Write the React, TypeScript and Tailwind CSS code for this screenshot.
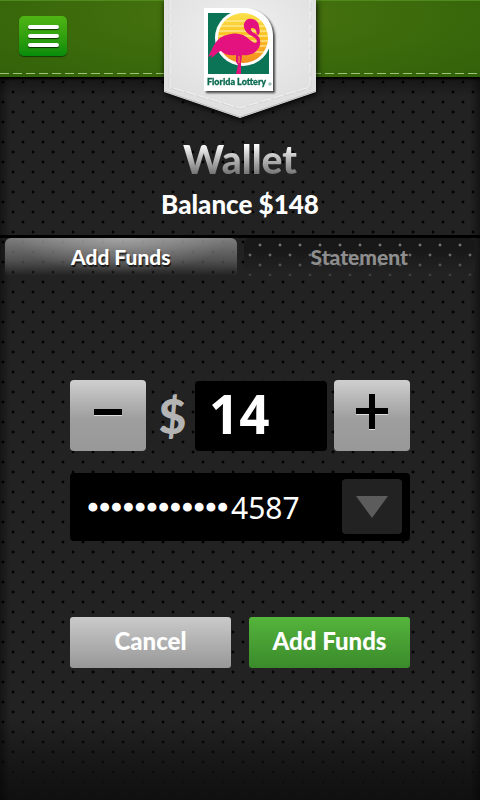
import { useState } from "react";

function LotteryLogo() {
  const stripes = [13, 18, 23, 28, 33, 38, 44];
  return (
    <svg viewBox="0 0 70 83" className="h-[83px] w-[70px] drop-shadow-[2px_2px_1px_rgba(0,0,0,0.7)]" role="img" aria-label="Florida Lottery">
      <defs>
        <linearGradient id="sun" x1="0" y1="0" x2="0" y2="1">
          <stop offset="0" stopColor="#fbe04a" />
          <stop offset="0.5" stopColor="#fbc023" />
          <stop offset="1" stopColor="#f48b1f" />
        </linearGradient>
        <clipPath id="disc">
          <circle cx="39" cy="30" r="25" />
        </clipPath>
      </defs>
      <path d="M0 0H43C60 2 69 14 69 28V83H0Z" fill="#fff" />
      <path d="M4 5H39V30H65V66H4Z" fill="#0b7456" />
      <circle cx="39" cy="30" r="28" fill="#fff" />
      <circle cx="39" cy="30" r="25" fill="url(#sun)" />
      <g clipPath="url(#disc)">
        {stripes.map((y) => (
          <path key={y} d={`M10 ${y}H68`} stroke="#fff3b8" strokeWidth="1" />
        ))}
      </g>
      <path
        d="M4 49L8 41C11 34 16 28 23 27C29 25 34 25 39 27C44 29 47 34 51 35C55 34 52 30 48 28C43 26 39 21 40 16C41 12 44 10 48 11C53 12 55 15 55 19C56 22 56 26 54 27C52 26 53 23 51 21C49 19 46 20 47 22C48 25 52 25 54 28C57 31 57 37 54 41C51 46 44 48 38 47L37 55L37 66H32L34 57L32 54V47C26 48 21 47 17 43C13 44 11 48 7 50L8 47Z"
        fill="#e3127e"
      />
      <path d="M35 48V55" stroke="#f9a52a" strokeWidth="1" />
      <text x="3" y="77" fill="#0b6b50" stroke="#0b6b50" strokeWidth="0.300" fontSize="9" fontWeight="900" fontFamily="Lato, sans-serif">
        Florida Lottery
      </text>
      <circle cx="66" cy="76" r="1.200" fill="none" stroke="#0b6b50" strokeWidth="0.500" />
    </svg>
  );
}

function Header() {
  return (
    <header className="relative h-[77px] border-t border-[#4f8a1c] bg-[radial-gradient(ellipse_at_50%_20%,#4b7410_0%,#3e6c0c_45%,#31610a_100%)] shadow-[0_2px_2px_#000]">
      <div className="px-[19px] pt-[15px]">
        <button
          type="button"
          aria-label="Menu"
          className="flex h-10 w-12 flex-col items-center justify-center gap-[5px] rounded-[5px] bg-linear-to-b from-[#4eb514] to-[#048c0b] pb-[1px] shadow-[0_1px_1px_#173a05]"
        >
          <span className="h-1 w-[31px] rounded-full bg-white shadow-[0_1px_1px_rgba(0,0,0,0.7)]" />
          <span className="h-1 w-[31px] rounded-full bg-white shadow-[0_1px_1px_rgba(0,0,0,0.7)]" />
          <span className="h-1 w-[31px] rounded-full bg-white shadow-[0_1px_1px_rgba(0,0,0,0.7)]" />
        </button>
      </div>
      <div className="absolute inset-x-0 bottom-[3px] h-px bg-[repeating-linear-gradient(90deg,#9cc473_0px,#9cc473_9px,transparent_9px,transparent_13px)]" />
      <div className="absolute -top-px left-1/2 h-[118px] w-[152px] -translate-x-1/2">
        <svg viewBox="0 0 152 118" className="absolute inset-0 h-full w-full overflow-visible drop-shadow-[1px_2px_3px_rgba(0,0,0,0.9)]" aria-hidden="true">
          <defs>
            <radialGradient id="badge" cx="0.5" cy="0.3" r="0.7">
              <stop offset="0" stopColor="#f0f0f0" />
              <stop offset="1" stopColor="#dedede" />
            </radialGradient>
          </defs>
          <path d="M0 0H152V92L76 118L0 92Z" fill="url(#badge)" />
          <path d="M0 91L76 117L152 91" fill="none" stroke="#bdbdbd" />
          <path d="M6 0V87L76 108L146 87V0" fill="none" stroke="#f2f2f2" strokeDasharray="10 3" />
          <path d="M5 0V88L76 109L147 88V0" fill="none" stroke="#c9c9c9" strokeWidth="0.500" strokeDasharray="10 3" />
        </svg>
        <div className="relative flex justify-center pt-2 pr-[2px]">
          <LotteryLogo />
        </div>
      </div>
    </header>
  );
}

const stepButton =
  "h-[71px] w-[76px] shrink-0 rounded bg-linear-to-b from-[#cfcfcf] via-[#9e9e9e] via-55% to-[#989898]";

export default function App() {
  const [amount, setAmount] = useState(14);
  return (
    <div className="min-h-screen bg-[#222] bg-[linear-gradient(90deg,rgba(0,0,0,0.4),transparent_10px,transparent_calc(100%-10px),rgba(0,0,0,0.4)),linear-gradient(0deg,#101010_0px,rgba(17,17,17,0.850)_22px,transparent_82px),radial-gradient(circle_at_3px_2px,#000_1px,transparent_1.8px),radial-gradient(circle_at_13px_12px,#000_1px,transparent_1.8px)] bg-[size:auto,auto,20px_20px,20px_20px] font-[Lato,'Open_Sans',sans-serif] text-white">
      <Header />
      <main>
        <section className="flex h-[158px] flex-col items-center bg-linear-to-b from-black/35 via-transparent via-12% pt-[58px] text-center">
          <h1 className="bg-linear-to-b from-white from-20% to-[#777] to-80% bg-clip-text text-[39px] leading-[48px] font-black text-transparent">
            Wallet
          </h1>
          <p className="text-[26px] leading-[42px] font-black">Balance $148</p>
        </section>
        <div role="tablist" className="flex gap-[7px] border-t-[3px] border-black px-[5px] text-[21px] leading-[36px] font-black">
          <button
            type="button"
            role="tab"
            aria-selected="true"
            className="h-[38px] flex-1 rounded-t-md bg-[radial-gradient(ellipse_at_50%_0%,rgba(255,255,255,0.300),transparent_65%),linear-gradient(180deg,rgba(150,150,150,0.800),rgba(100,100,100,0.700)_60%,transparent)] text-shadow-[1px_2px_1px_rgba(0,0,0,0.7)]"
          >
            Add Funds
          </button>
          <button
            type="button"
            role="tab"
            aria-selected="false"
            className="h-[38px] flex-1 rounded-md bg-[linear-gradient(180deg,rgba(24,24,24,0)_30%,rgba(34,34,34,0.700)),radial-gradient(circle_at_16px_7px,#777_1px,transparent_1.8px),radial-gradient(circle_at_6px_17px,#777_1px,transparent_1.8px),linear-gradient(180deg,#181818_40%,#222)] bg-[size:auto,20px_20px,20px_20px,auto] text-[#8e8e8e]"
          >
            Statement
          </button>
        </div>
        <form className="px-[70px] pt-[104px]" onSubmit={(e) => e.preventDefault()}>
          <div className="flex items-center gap-[7px]">
            <button type="button" aria-label="Decrease amount" className={stepButton} onClick={() => setAmount(Math.max(0, amount - 1))}>
              <span className="mx-auto mb-[8px] block h-[6px] w-7 bg-black shadow-[0_1px_0_#ddd]" />
            </button>
            <label htmlFor="amount" className="w-[35px] pl-1 text-center text-[48px] leading-[66px] font-black text-[#b4b4b4]">
              $
            </label>
            <input
              id="amount"
              inputMode="numeric"
              value={amount}
              onChange={(e) => setAmount(Number(e.target.value) || 0)}
              className="h-[70px] min-w-0 flex-1 rounded bg-black px-[14px] pb-1 font-['Noto_Sans',sans-serif] text-[53px] leading-[66px] font-bold outline-none"
            />
            <button type="button" aria-label="Increase amount" className={stepButton} onClick={() => setAmount(amount + 1)}>
              <svg viewBox="0 0 34 36" className="mx-auto mb-[8px] h-9 w-[34px]" aria-hidden="true">
                <path d="M14 1H20V15H33V21H20V36H14V21H1V15H14Z" fill="#ddd" />
                <path d="M14 0H20V14H33V20H20V35H14V20H1V14H14Z" fill="#000" />
              </svg>
            </button>
          </div>
          <div className="relative mt-[22px]">
            <select
              aria-label="Card"
              className="h-[68px] w-full appearance-none rounded bg-black pr-[68px] pl-[161px] font-['Noto_Sans',sans-serif] text-[30px] outline-none"
            >
              <option>4587</option>
            </select>
            <span className="pointer-events-none absolute inset-y-0 left-[17px] font-['DejaVu_Sans',sans-serif] text-[20px] leading-[68px] [-webkit-text-stroke:3px_white]">
              ••••••••••••
            </span>
            <span className="pointer-events-none absolute top-[6px] right-[8px] flex h-[55px] w-[60px] items-center justify-center rounded bg-[#222]">
              <svg viewBox="0 0 32 22" className="h-[22px] w-8" aria-hidden="true">
                <path d="M0 0H32L16 22Z" fill="#5c5c5c" />
              </svg>
            </span>
          </div>
          <div className="mt-[76px] flex gap-[18px] text-[24px] font-black text-shadow-[1px_2px_2px_rgba(0,0,0,0.7)]">
            <button type="button" className="h-[51px] flex-1 rounded-[3px] bg-linear-to-b from-[#cacaca] to-[#989898] pb-1">
              Cancel
            </button>
            <button type="submit" className="h-[51px] flex-1 rounded-[3px] bg-linear-to-b from-[#55b53c] to-[#3b8a2b] pb-1">
              Add Funds
            </button>
          </div>
        </form>
      </main>
    </div>
  );
}
